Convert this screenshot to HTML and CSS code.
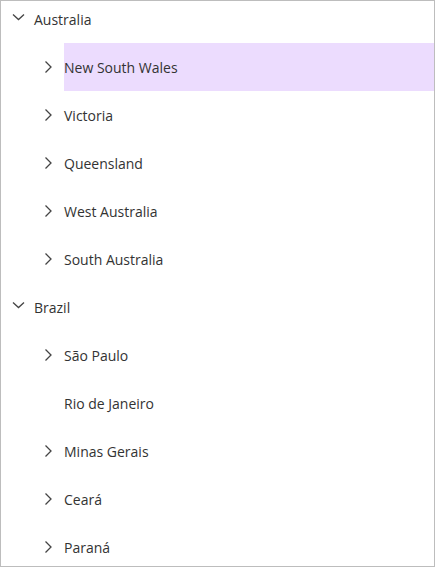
FILE: index.html
```html
<!DOCTYPE html>
<html>
<head>
<meta charset="utf-8">
<link rel="stylesheet" href="styles.css">
</head>
<body>
<div class="tree">
  <ul class="list">
    <li class="row lvl1"><span class="icon"><svg width="16" height="16" viewBox="0 0 16 16"><path d="M3 3.5 L8.5 8.5 L14 3.5" fill="none" stroke="#444" stroke-width="1.3"/></svg></span><span class="text">Australia</span></li>
    <li class="row lvl2"><span class="icon"><svg width="16" height="16" viewBox="0 0 16 16"><path d="M5.5 2.5 L11 8 L5.5 13.5" fill="none" stroke="#444" stroke-width="1.3"/></svg></span><span class="text selected">New South Wales</span></li>
    <li class="row lvl2"><span class="icon"><svg width="16" height="16" viewBox="0 0 16 16"><path d="M5.5 2.5 L11 8 L5.5 13.5" fill="none" stroke="#444" stroke-width="1.3"/></svg></span><span class="text">Victoria</span></li>
    <li class="row lvl2"><span class="icon"><svg width="16" height="16" viewBox="0 0 16 16"><path d="M5.5 2.5 L11 8 L5.5 13.5" fill="none" stroke="#444" stroke-width="1.3"/></svg></span><span class="text">Queensland</span></li>
    <li class="row lvl2"><span class="icon"><svg width="16" height="16" viewBox="0 0 16 16"><path d="M5.5 2.5 L11 8 L5.5 13.5" fill="none" stroke="#444" stroke-width="1.3"/></svg></span><span class="text">West Australia</span></li>
    <li class="row lvl2"><span class="icon"><svg width="16" height="16" viewBox="0 0 16 16"><path d="M5.5 2.5 L11 8 L5.5 13.5" fill="none" stroke="#444" stroke-width="1.3"/></svg></span><span class="text">South Australia</span></li>
    <li class="row lvl1"><span class="icon"><svg width="16" height="16" viewBox="0 0 16 16"><path d="M3 3.5 L8.5 8.5 L14 3.5" fill="none" stroke="#444" stroke-width="1.3"/></svg></span><span class="text">Brazil</span></li>
    <li class="row lvl2"><span class="icon"><svg width="16" height="16" viewBox="0 0 16 16"><path d="M5.5 2.5 L11 8 L5.5 13.5" fill="none" stroke="#444" stroke-width="1.3"/></svg></span><span class="text">São Paulo</span></li>
    <li class="row lvl2"><span class="icon"></span><span class="text">Rio de Janeiro</span></li>
    <li class="row lvl2"><span class="icon"><svg width="16" height="16" viewBox="0 0 16 16"><path d="M5.5 2.5 L11 8 L5.5 13.5" fill="none" stroke="#444" stroke-width="1.3"/></svg></span><span class="text">Minas Gerais</span></li>
    <li class="row lvl2"><span class="icon"><svg width="16" height="16" viewBox="0 0 16 16"><path d="M5.5 2.5 L11 8 L5.5 13.5" fill="none" stroke="#444" stroke-width="1.3"/></svg></span><span class="text">Ceará</span></li>
    <li class="row lvl2"><span class="icon"><svg width="16" height="16" viewBox="0 0 16 16"><path d="M5.5 2.5 L11 8 L5.5 13.5" fill="none" stroke="#444" stroke-width="1.3"/></svg></span><span class="text">Paraná</span></li>
  </ul>
</div>
</body>
</html>
```
FILE: styles.css
```css
* { box-sizing: border-box; }
html, body { margin: 0; padding: 0; background: #fff; }
.tree {
  width: 435px;
  height: 567px;
  border: 1px solid #bdbdbd;
  overflow: hidden;
  font-family: "Open Sans", sans-serif;
  font-size: 14px;
  color: #333;
}
.list {
  list-style: none;
  margin: -6px 0 0 0;
  padding: 0;
}
.row {
  display: flex;
  align-items: stretch;
  gap: 4px;
  height: 48px;
}
.lvl1 { padding-left: 5px; }
.lvl2 { padding-left: 35px; }
.icon {
  width: 24px;
  display: flex;
  align-items: center;
  justify-content: center;
  flex: none;
}
.icon svg { display: block; }
.text {
  flex: 1;
  display: flex;
  align-items: center;
}
.selected { background: #ecdcfe; }
```
